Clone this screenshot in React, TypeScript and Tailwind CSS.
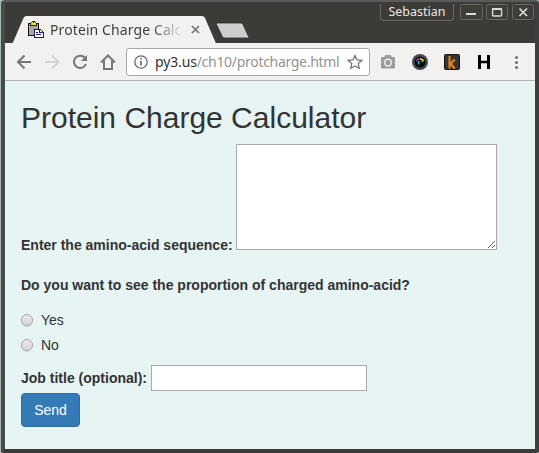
import React from "react";

const UI = "font-['Noto_Sans','Open_Sans',sans-serif]";

function WindowControls() {
  return (
    <div className="flex h-[17px] items-stretch">
      <div className={`${UI} flex w-[74px] items-center justify-center rounded-b-[4px] border border-t-0 border-[#696760] text-[12.500px] leading-none text-[#e9e7e1]`}>
        Sebastian
      </div>
      <svg className="ml-[6px]" width="75" height="17" viewBox="0 0 75 17" fill="none">
        <g stroke="#696760" fill="#3f3e3a">
          <rect x=".5" y=".5" width="22" height="15" rx="2" />
          <rect x="26.500" y=".5" width="21" height="15" rx="2" />
          <rect x="52.500" y=".5" width="21" height="15" rx="2" />
        </g>
        <path d="M6 10h10" stroke="#dfdbd2" strokeWidth="2" />
        <rect x="32.600" y="5" width="9" height="7" rx="1" stroke="#dfdbd2" strokeWidth="1.400" />
        <path d="M32 5h10" stroke="#dfdbd2" strokeWidth="2" />
        <path d="M59.500 4.500l7.500 7.500M67 4.500l-7.500 7.500" stroke="#dfdbd2" strokeWidth="1.700" />
      </svg>
    </div>
  );
}

function PasteIcon() {
  return (
    <svg width="17" height="17" viewBox="0 0 17 17" shapeRendering="crispEdges">
      <path d="M1 2h11v13H1z" fill="#111" />
      <path d="M2 3h9v11H2z" fill="#aaa8a3" />
      <path d="M4 1h1V0h3v1h1v1h1v3H3V2h1z" fill="#222" />
      <path d="M5 1h3v1h1v2H4V2h1z" fill="#f2e632" />
      <path d="M6 1h1v1H6z" fill="#222" />
      <path d="M7 8h6l3 3v5H7z" fill="#fff" stroke="#17177c" />
      <path d="M12.500 8v3.500H16M9 11h2M9 13.500h5" fill="none" stroke="#17177c" />
    </svg>
  );
}

function TabStrip() {
  return (
    <div className="relative h-[27px] w-full">
      <svg className="absolute left-0 top-0" width="260" height="28" viewBox="0 0 260 28">
        <path d="M0 28V27.500H6.500C8 27 8.500 25 9 24L18.500 2Q19.500 0 21.500 0H197Q199 0 200 2L211 27.500V28Z" fill="#f2f1f0" />
        <path d="M212 7h24q1.500 0 2 1.500l5.500 12q.7 1.500-1 1.500H220q-2 0-2.700-1.500L211.500 8.500q-.5-1.500.5-1.500z" fill="#cfcecd" stroke="#2d2c29" strokeWidth=".8" />
      </svg>
      <div className="relative flex h-[27px] items-center pl-[22px]">
        <PasteIcon />
        <div className={`${UI} ml-[6px] w-[134px] whitespace-nowrap bg-gradient-to-r from-[#3b3b3b] from-[76%] to-transparent to-[99%] bg-clip-text text-[14px] leading-[20px] tracking-[0.1px] text-transparent`}>
          Protein Charge Calc
        </div>
        <svg className="ml-[7px]" width="9" height="9" viewBox="0 0 9 9">
          <path d="M1 1l7 7M8 1L1 8" stroke="#73726f" strokeWidth="1.600" />
        </svg>
      </div>
    </div>
  );
}

function NavIcons() {
  return (
    <svg width="121" height="37" viewBox="5 43 121 37" fill="none" stroke="#777674" strokeWidth="2">
      <path d="M31 62H18.500M24.500 55.500L18 62l6.500 6.500" />
      <path d="M45 62h13M52 55.500l6.500 6.500-6.500 6.500" stroke="#d5d4d2" />
      <path d="M84.800 57.700A6.200 6.200 0 1 0 86 64" />
      <path d="M87 55v6h-6z" fill="#777674" stroke="none" />
      <path d="M101 62.500l7-7 7 7M104 60.500V69h8v-8.500" />
    </svg>
  );
}

function Extensions() {
  return (
    <svg width="165" height="37" viewBox="370 43 165 37">
      <path d="M382 57h2l1.500-2h5l1.500 2h2q1 0 1 1v9.500q0 1-1 1h-12q-1 0-1-1V58q0-1 1-1z" fill="#9d9c9b" />
      <circle cx="388" cy="62.600" r="3.400" fill="none" stroke="#f2f1f0" strokeWidth="1.500" />
      <circle cx="388" cy="62.600" r="1.500" fill="#9d9c9b" />
      <circle cx="420" cy="62" r="8" fill="#484a52" />
      <circle cx="420" cy="62" r="5.500" fill="#08080a" />
      <path d="M416.800 61a3.600 3.600 0 0 1 2.700-2.500" stroke="#b82fc5" strokeWidth="1.700" fill="none" />
      <path d="M420 58.800q2.500.2 3.500 2.200" stroke="#e3db35" strokeWidth="1.800" fill="none" />
      <path d="M423.300 61.500l-2-.5" stroke="#25bd5c" strokeWidth="1.800" fill="none" />
      <path d="M418.700 61v3.500" stroke="#20afd4" strokeWidth="1.700" />
      <rect x="444" y="54" width="16" height="16" rx="2" fill="#151515" />
      <rect x="445" y="55" width="14" height="14" rx="1" fill="#353433" />
      <path d="M449.500 56v12.500M454.700 59.500l-4.200 4.200 4.300 4.800" stroke="#ef8611" strokeWidth="2" fill="none" />
      <path d="M479.500 55v14M488.500 55v14" stroke="#000" strokeWidth="3" />
      <path d="M480 62h8" stroke="#000" strokeWidth="2.500" />
      <g fill="#777674"><circle cx="516.500" cy="57.500" r="1.600" /><circle cx="516.500" cy="62.500" r="1.600" /><circle cx="516.500" cy="67.500" r="1.600" /></g>
    </svg>
  );
}

function Toolbar() {
  return (
    <div className="flex h-[38px] border-b border-[#b7b4b7] bg-[#f2f1f0]">
      <NavIcons />
      <div className="mt-[5px] flex h-[28px] w-[244px] items-center rounded-[3px] border border-[#a9a8a7] bg-white pl-[7px]">
        <svg className="shrink-0" width="14" height="14" viewBox="0 0 14 14" fill="none">
          <circle cx="7" cy="7" r="6.200" stroke="#686868" strokeWidth="1.300" />
          <path d="M7 6v4.500M7 3v1.600" stroke="#686868" strokeWidth="1.700" />
        </svg>
        <div className={`${UI} ml-[7px] w-[192px] shrink-0 whitespace-nowrap text-[14px] leading-[20px] tracking-[-0.3px] text-[#929292]`}>
          <span className="tracking-[-0.15px] text-[#333333]">py3.us</span>/ch10/protcharge.html
        </div>
        <svg className="shrink-0" width="16" height="16" viewBox="0 0 16 16">
          <path d="M8 1.500l2 4.400 4.800.5-3.600 3.200 1 4.700L8 11.900l-4.200 2.400 1-4.700-3.600-3.200 4.800-.5z" fill="none" stroke="#747474" strokeWidth="1.300" />
        </svg>
      </div>
      <Extensions />
    </div>
  );
}

const radioClass =
  "m-0 size-[12px] appearance-none rounded-full border border-[#a9a9a9] bg-gradient-to-b from-[#e9e9e9] to-[#d8d8d8] shadow-[0_1px_1px_rgba(0,0,0,0.12)]";

function ChargeForm() {
  return (
    <main className="h-[368px] bg-[#e6f4f4] px-4 pt-[20px] font-['Liberation_Sans',Arial,sans-serif] text-[14px] leading-[20px] text-[#333]">
      <h1 className="text-[30px] leading-[33px]">Protein Charge Calculator</h1>
      <form onSubmit={(e) => e.preventDefault()}>
        <div className="mt-[10px] flex items-end">
          <label htmlFor="sequence" className="w-[215px] whitespace-nowrap font-bold leading-[10px]">Enter the amino-acid sequence:</label>
          <textarea id="sequence" className="h-[106px] w-[261px] resize border border-[#a9a9a9] bg-white" />
        </div>
        <p className="mt-[25px] font-bold">Do you want to see the proportion of charged amino-acid?</p>
        <div className="mt-[15px] flex flex-col gap-[5px]">
          <label className="flex items-center gap-[8px]"><input type="radio" name="proportion" className={radioClass} />Yes</label>
          <label className="flex items-center gap-[8px]"><input type="radio" name="proportion" className={radioClass} />No</label>
        </div>
        <div className="mt-[10px] flex items-center">
          <label htmlFor="job" className="w-[130px] whitespace-nowrap font-bold">Job title (optional):</label>
          <input id="job" className="h-[26px] w-[216px] border border-[#a9a9a9] bg-white px-1" />
        </div>
        <button className="mt-[2px] flex h-[34px] w-[59px] items-center justify-center rounded-[4px] border border-[#2e6da4] bg-[#337ab7] text-white">Send</button>
      </form>
    </main>
  );
}

export default function App() {
  return (
    <div className="h-[453px] w-[539px] overflow-hidden bg-[#a9b8b5]">
      <div className="ml-px h-[453px] w-[538px] rounded-t-[4px] rounded-b-[3px] border-x-4 border-b-4 border-t-2 border-l-[#464b47] border-r-[#403f3d] border-b-[#3c3b39] border-t-[#5b5b5c] bg-[#3c3b37]">
        <div className="flex h-[14px] justify-end pt-[2px]"><WindowControls /></div>
        <TabStrip />
        <Toolbar />
        <ChargeForm />
      </div>
    </div>
  );
}
